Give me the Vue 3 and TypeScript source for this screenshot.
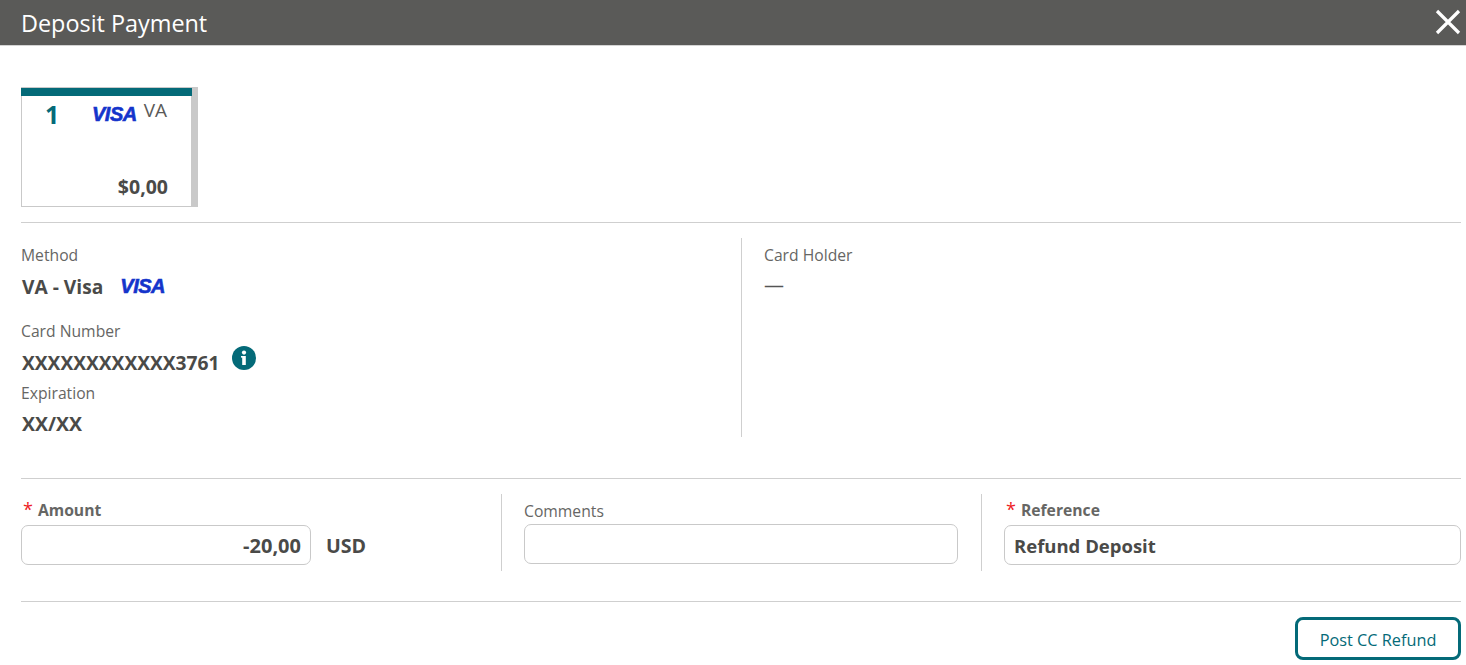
<script setup lang="ts">
interface Field { label: string; value: string }
const holder: Field = { label: 'Card Holder', value: '—' }
</script>

<template>
  <div class="dialog">
    <header class="titlebar">
      <h1 class="title">Deposit Payment</h1>
      <button class="close" aria-label="Close">
        <svg width="26" height="26" viewBox="0 0 26 26"><path d="M2 2 L24 24 M24 2 L2 24" stroke="#fff" stroke-width="3.2" fill="none" /></svg>
      </button>
    </header>

    <main class="body">
      <section class="cards">
        <div class="card">
          <div class="card-bar"></div>
          <div class="card-top">
            <span class="card-num">1</span>
            <span class="visa card-visa">VISA</span>
            <span class="card-code">VA</span>
          </div>
          <div class="card-amount">$0,00</div>
        </div>
      </section>

      <section class="info">
        <div class="info-left">
          <div class="label">Method</div>
          <div class="value method"><span>VA - Visa</span><span class="visa">VISA</span></div>
          <div class="label card-label">Card Number</div>
          <div class="value number">
            <span>XXXXXXXXXXXX3761</span>
            <svg class="info-icon" width="24" height="24" viewBox="0 0 24 24">
              <circle cx="12" cy="12" r="12" fill="#046a78" />
              <rect x="10.2" y="10" width="3.6" height="9" fill="#fff" />
              <rect x="9" y="10" width="3" height="1.6" fill="#fff" />
              <circle cx="12" cy="6.6" r="2.1" fill="#fff" />
            </svg>
          </div>
          <div class="label exp-label">Expiration</div>
          <div class="value exp-value">XX/XX</div>
        </div>
        <div class="info-right">
          <div class="label">{{ holder.label }}</div>
          <div class="dash">{{ holder.value }}</div>
        </div>
      </section>

      <section class="form">
        <div class="col first">
          <div class="flabel strong"><span class="req">*</span>Amount</div>
          <div class="amount-row">
            <input class="input amount" value="-20,00" />
            <span class="usd">USD</span>
          </div>
        </div>
        <div class="col mid">
          <div class="flabel">Comments</div>
          <input class="input comments" />
        </div>
        <div class="col last">
          <div class="flabel strong"><span class="req">*</span>Reference</div>
          <input class="input reference" value="Refund Deposit" />
        </div>
      </section>

      <footer class="actions">
        <button class="primary">Post CC Refund</button>
      </footer>
    </main>
  </div>
</template>

<style>
html, body { margin: 0; background: #fff; overflow: hidden; }
</style>

<style scoped>
.dialog {
  width: 1466px;
  height: 665px;
  font-family: "Open Sans", "Noto Sans", sans-serif;
  color: #4a4a48;
  background: #fff;
  overflow: hidden;
}
.titlebar {
  height: 45px;
  border-bottom: 1px solid #d4d4d4;
  background: #5a5a58;
  display: flex;
  align-items: center;
  justify-content: space-between;
  padding: 0 5px 0 21px;
}
.title {
  margin: 0;
  font-size: 23.4px;
  font-weight: 400;
  color: #fff;
  line-height: 48px;
}
.close {
  border: 0;
  background: none;
  padding: 0;
  width: 26px;
  height: 26px;
  margin-top: -1px;
  display: block;
}
.close svg { display: block; }
.body { padding: 41px 5px 0 21px; }
.cards { height: 135px; border-bottom: 1px solid #cfcfcf; }
.card {
  width: 177px;
  height: 120px;
  box-sizing: border-box;
  border: 1px solid #c9c9c9;
  border-right: 7px solid #c9c9c9;
  display: flex;
  flex-direction: column;
}
.card-bar {
  height: 8px;
  margin: 0 -1px 0 -1px;
  background: #046a78;
  flex: none;
}
.card-top { display: flex; align-items: flex-start; height: 30px; }
.card-num {
  margin-left: 23px;
  width: 47px;
  font-size: 25px;
  font-weight: 700;
  line-height: 36px;
  color: #046a78;
}
.visa {
  font-family: "Liberation Sans", sans-serif;
  font-style: italic;
  font-weight: 700;
  color: #1434cb;
  font-size: 20px;
  letter-spacing: -0.5px;
  -webkit-text-stroke: 0.6px #1434cb;
}
.card-visa { line-height: 36px; }
.card-code {
  margin-left: 7px;
  font-size: 19px;
  line-height: 28px;
  color: #5a5a58;
}
.card-amount {
  margin-top: auto;
  text-align: right;
  padding-right: 23px;
  font-size: 19.5px;
  font-weight: 700;
  line-height: 38px;
}
.info { display: flex; height: 199px; margin-top: 15px; }
.info-left { width: 720px; border-right: 1px solid #cfcfcf; }
.info-right { padding-left: 22px; }
.label { font-size: 15.7px; line-height: 34px; color: #666664; height: 34px; }
.value {
  font-size: 19.2px;
  font-weight: 700;
  line-height: 30px;
  height: 30px;
  margin-left: 1px;
}
.method { display: flex; gap: 17px; line-height: 30px; }
.method .visa { line-height: 28px; }
.card-label { margin-top: 12px; }
.number { display: flex; align-items: center; }
.info-icon { margin: -10px 0 0 13px; }
.exp-label { margin-top: -2px; }
.exp-value { margin-top: -1px; font-size: 19.5px; }
.dash { font-size: 20px; line-height: 26px; color: #555; }
.form {
  display: grid;
  grid-template-columns: 481px 480px 479px;
  margin-top: 41px;
  padding-top: 15px;
  height: 77px;
  border-top: 1px solid #cfcfcf;
}
.col { box-sizing: border-box; border-right: 1px solid #cfcfcf; }
.mid { padding: 0 23px 0 22px; }
.last { padding-left: 22px; border-right: 0; }
.flabel {
  font-size: 15.7px;
  line-height: 34px;
  height: 30px;
  color: #666664;
}
.strong { font-weight: 700; line-height: 31px; }
.req { color: #ee1c25; font-weight: 400; font-size: 18px; margin: 0 5px 0 2px; }
.amount-row { display: flex; align-items: center; gap: 15px; }
.input {
  box-sizing: border-box;
  display: block;
  height: 40px;
  border: 1px solid #c9c9c9;
  border-radius: 7px;
  background: #fff;
  outline: none;
  padding: 0 9px;
  font: 700 18.5px "Open Sans", "Noto Sans", sans-serif;
  color: #4a4a48;
}
.amount { width: 290px; text-align: right; margin-top: 1px; font-size: 20px; }
.usd { font-size: 19.6px; font-weight: 700; margin-top: 1px; }
.comments { width: 100%; }
.reference { width: 100%; margin-top: 1px; }
.actions {
  margin-top: 30px;
  padding-top: 15px;
  border-top: 1px solid #cfcfcf;
  display: flex;
  justify-content: flex-end;
}
.primary {
  box-sizing: border-box;
  width: 166px;
  height: 43px;
  border: 3px solid #046a78;
  border-radius: 8px;
  background: #fff;
  color: #046a78;
  font: 400 16.3px "Open Sans", "Noto Sans", sans-serif;
  padding: 2px 0 0;
}
</style>
